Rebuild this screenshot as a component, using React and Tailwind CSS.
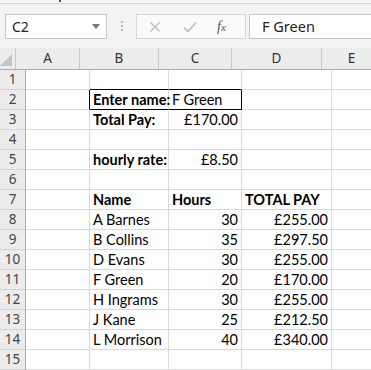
import React from 'react';

const cols = ['A', 'B', 'C', 'D', 'E'];
const colW = ['w-[64px]', 'w-[79px]', 'w-[73px]', 'w-[90px]', 'w-[60px]'];

// cell content per row: [A, B, C, D, E] with { t, bold, right }
const rows = [
  [],
  [null, { t: 'Enter name:', bold: true }, { t: 'F Green' }],
  [null, { t: 'Total Pay:', bold: true }, { t: '£170.00', right: true }],
  [],
  [null, { t: 'hourly rate:', bold: true }, { t: '£8.50', right: true }],
  [],
  [null, { t: 'Name', bold: true }, { t: 'Hours', bold: true }, { t: 'TOTAL PAY', bold: true }],
  [null, { t: 'A Barnes' }, { t: '30', right: true }, { t: '£255.00', right: true }],
  [null, { t: 'B Collins' }, { t: '35', right: true }, { t: '£297.50', right: true }],
  [null, { t: 'D Evans' }, { t: '30', right: true }, { t: '£255.00', right: true }],
  [null, { t: 'F Green' }, { t: '20', right: true }, { t: '£170.00', right: true }],
  [null, { t: 'H Ingrams' }, { t: '30', right: true }, { t: '£255.00', right: true }],
  [null, { t: 'J Kane' }, { t: '25', right: true }, { t: '£212.50', right: true }],
  [null, { t: 'L Morrison' }, { t: '40', right: true }, { t: '£340.00', right: true }],
  [],
];

function cellBorder(r, c) {
  // black box around B2:C2
  let right = 'border-r-[#d9d9d9]';
  let bottom = 'border-b-[#d9d9d9]';
  if (r === 0 && (c === 1 || c === 2)) bottom = 'border-b-black';
  if (r === 1 && (c === 1 || c === 2)) bottom = 'border-b-black';
  if (r === 1 && (c === 0 || c === 2)) right = 'border-r-black';
  return right + ' ' + bottom;
}

export default function App() {
  return (
    <div className="w-[371px] h-[370px] overflow-hidden bg-white font-['Lato',sans-serif] text-black">
      <div className="h-[4px] bg-[#f7f7f7] border-b border-[#d6d6d6] relative">
        <div className="absolute left-[59px] top-0 w-[2px] h-[2px] bg-[#555]"></div>
      </div>
      <div className="h-[44px] bg-[#f3f3f3] flex items-start pt-[10px] font-['Noto_Sans',sans-serif]">
        <div className="ml-[5px] w-[102px] h-[25px] bg-white border border-[#c6c6c6] flex items-center justify-between pl-[6px] pr-[6px]">
          <span className="text-[14px] text-[#222]">C2</span>
          <svg width="8" height="5" viewBox="0 0 8 5"><path d="M0 0h8L4 5z" fill="#777" /></svg>
        </div>
        <div className="ml-[14px] mt-[7px] flex flex-col gap-[2px]">
          <div className="w-[2px] h-[2px] bg-[#b5b5b5]"></div>
          <div className="w-[2px] h-[2px] bg-[#b5b5b5]"></div>
          <div className="w-[2px] h-[2px] bg-[#b5b5b5]"></div>
        </div>
        <div className="ml-[13px] w-[110px] h-[25px] bg-[#fafafa] border border-[#d4d4d4] flex items-center">
          <svg className="ml-[12px]" width="12" height="12" viewBox="0 0 12 12">
            <path d="M1.5 1.5l9 9M10.5 1.5l-9 9" stroke="#bdbdbd" strokeWidth="1.4" />
          </svg>
          <svg className="ml-[22px]" width="14" height="12" viewBox="0 0 14 12">
            <path d="M1 6.5l4 4 8-9" stroke="#bdbdbd" strokeWidth="1.6" fill="none" />
          </svg>
          <span className="ml-[20px] font-['Liberation_Serif',serif] italic text-[14px] text-[#555] leading-none">
            f<span className="text-[11px]">x</span>
          </span>
        </div>
        <div className="ml-[3px] flex-1 h-[25px] bg-white border border-r-0 border-[#c6c6c6] flex items-center pl-[12px]">
          <span className="text-[14.5px] text-[#222]">F Green</span>
        </div>
      </div>
      <div className="flex h-[22px] bg-[#ececec] border-b border-[#ababab] font-['Noto_Sans',sans-serif]">
        <div className="w-[26px] h-full border-r border-[#c8c8c8] flex items-end justify-end pr-[3px] pb-[3px]">
          <svg width="12" height="12" viewBox="0 0 12 12"><path d="M12 0v12H0z" fill="#c4c4c4" /></svg>
        </div>
        {cols.map((c, i) => (
          <div key={c} className={`${colW[i]} shrink-0 h-full border-r border-[#c8c8c8] flex items-center justify-center text-[13.5px] text-[#333]`}>
            {c}
          </div>
        ))}
      </div>
      {rows.map((row, r) => (
        <div key={r} className="flex h-[20px]">
          <div className="w-[26px] shrink-0 bg-[#ececec] border-r border-b border-r-[#ababab] border-b-[#d4d4d4] flex items-center justify-center text-[13.5px] text-[#444] font-['Noto_Sans',sans-serif]">
            {r + 1}
          </div>
          {cols.map((c, ci) => {
            const cell = row[ci];
            return (
              <div
                key={c}
                className={`${colW[ci]} shrink-0 border-r border-b ${cellBorder(r, ci)} flex items-end pb-[1px] px-[3px] text-[14.5px] leading-[17px] whitespace-nowrap ${cell && cell.right ? 'justify-end' : 'justify-start'} ${cell && cell.bold ? 'font-bold' : ''} ${ci === 1 ? 'overflow-visible' : ''}`}
              >
                {cell ? cell.t : ''}
              </div>
            );
          })}
        </div>
      ))}
    </div>
  );
}
